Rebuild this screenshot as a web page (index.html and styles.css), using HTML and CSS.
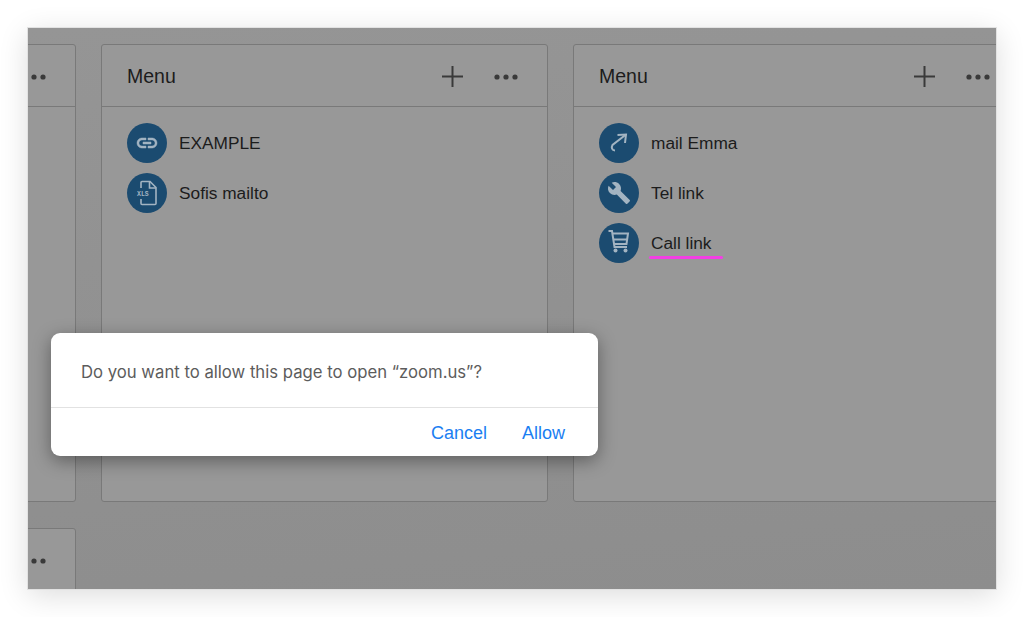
FILE: index.html
```
<!DOCTYPE html>
<html lang="en">
<head>
<meta charset="utf-8">
<title>Menu</title>
<link rel="stylesheet" href="styles.css">
</head>
<body>
<main class="window">
  <div class="board">
    <section class="card">
      <header class="card-head card-head-end">
        <div class="card-tools">
          <svg class="dots" viewBox="0 0 24 6"><circle cx="3" cy="3" r="2.600"/><circle cx="12" cy="3" r="2.600"/><circle cx="21" cy="3" r="2.600"/></svg>
        </div>
      </header>
    </section>
    <section class="card">
      <header class="card-head">
        <h2 class="card-title">Menu</h2>
        <div class="card-tools">
          <svg class="plus" viewBox="0 0 21 21"><path d="M10.5 0v21M0 10.500h21"/></svg>
          <svg class="dots" viewBox="0 0 24 6"><circle cx="3" cy="3" r="2.600"/><circle cx="12" cy="3" r="2.600"/><circle cx="21" cy="3" r="2.600"/></svg>
        </div>
      </header>
      <ul class="items">
        <li class="item">
          <span class="badge"><svg class="glyph glyph-bold" viewBox="0 0 24 24"><path d="M3.900 12c0-1.710 1.390-3.100 3.100-3.100h4V7H7c-2.760 0-5 2.240-5 5s2.240 5 5 5h4v-1.900H7c-1.710 0-3.100-1.390-3.100-3.100zM8 13h8v-2H8v2zm9-6h-4v1.900h4c1.710 0 3.100 1.390 3.100 3.100s-1.390 3.100-3.100 3.100h-4V17h4c2.760 0 5-2.240 5-5s-2.240-5-5-5z"/></svg></span>
          <span class="label">EXAMPLE</span>
        </li>
        <li class="item">
          <span class="badge"><svg class="glyph-large" viewBox="0 0 40 40"><path class="line" d="M14 15v-5.500a1 1 0 0 1 1-1h8l6 6v16a1 1 0 0 1-1 1H15a1 1 0 0 1-1-1V26"/><path class="line" d="M22.500 8.500v6.500H29"/><text class="xls" x="10" y="22.500">XLS</text></svg></span>
          <span class="label">Sofis mailto</span>
        </li>
      </ul>
    </section>
    <section class="card">
      <header class="card-head">
        <h2 class="card-title">Menu</h2>
        <div class="card-tools">
          <svg class="plus" viewBox="0 0 21 21"><path d="M10.5 0v21M0 10.500h21"/></svg>
          <svg class="dots" viewBox="0 0 24 6"><circle cx="3" cy="3" r="2.600"/><circle cx="12" cy="3" r="2.600"/><circle cx="21" cy="3" r="2.600"/></svg>
        </div>
      </header>
      <ul class="items">
        <li class="item">
          <span class="badge"><svg class="glyph-large" viewBox="0 0 40 40"><path class="line line-bold" d="M16 27.500c-3 0-4-3-2.500-5.500L27 11.500"/><path class="line line-bold" d="M18.500 12L27 11.500 26 20"/></svg></span>
          <span class="label">mail Emma</span>
        </li>
        <li class="item">
          <span class="badge"><svg class="glyph" viewBox="0 0 24 24"><path d="M22.700 19l-9.100-9.100c.9-2.300.4-5-1.500-6.900-2-2-5-2.400-7.400-1.300L9 6 6 9 1.600 4.700C.4 7.100.9 10.100 2.900 12.100c1.900 1.900 4.600 2.400 6.900 1.500l9.100 9.100c.4.400 1 .4 1.400 0l2.300-2.300c.5-.4.5-1.100.1-1.400z"/></svg></span>
          <span class="label">Tel link</span>
        </li>
        <li class="item">
          <span class="badge"><svg class="glyph-large" viewBox="0 0 40 40"><path class="line line-bold" d="M9.500 8h3.500l2.500 16h12.500"/><path class="line line-bold" d="M13.500 10.500H29l-1.500 10.500H15"/><path class="line line-bold" d="M15 16.500h13"/><circle class="wheel" cx="16.500" cy="27.500" r="2"/><circle class="wheel" cx="26.500" cy="27.500" r="2"/></svg></span>
          <span class="label">Call link</span>
          <span class="scribble"></span>
        </li>
      </ul>
    </section>
    <section class="card">
      <header class="card-head card-head-end">
        <div class="card-tools">
          <svg class="dots" viewBox="0 0 24 6"><circle cx="3" cy="3" r="2.600"/><circle cx="12" cy="3" r="2.600"/><circle cx="21" cy="3" r="2.600"/></svg>
        </div>
      </header>
    </section>
  </div>
  <div class="dialog" role="dialog">
    <p class="dialog-text">Do you want to allow this page to open “zoom.us”?</p>
    <div class="dialog-actions">
      <button class="dialog-btn">Cancel</button>
      <button class="dialog-btn">Allow</button>
    </div>
  </div>
</main>
</body>
</html>
```
FILE: styles.css
```
* { box-sizing: border-box; }
html, body { margin: 0; height: 100%; background: #fff; overflow: hidden; }
body { padding: 28px; font-family: "Liberation Sans", Arial, sans-serif; }

.window {
  position: relative;
  width: 968px;
  height: 561px;
  overflow: hidden;
  background: linear-gradient(175deg, #959595, #8d8d8d);
  box-shadow: 0 0 0 1px #e2e2e2, 0 6px 28px rgba(0, 0, 0, .14);
}

.board {
  display: grid;
  grid-template-columns: repeat(3, 447px);
  grid-auto-rows: 458px;
  gap: 26px 25px;
  margin-left: -399px;
  padding-top: 16px;
}

.card {
  background: #989898;
  border: 1px solid #797979;
  border-radius: 3px;
}

.card-head {
  display: flex;
  align-items: center;
  justify-content: space-between;
  height: 62px;
  padding: 2px 29px 0 25px;
  border-bottom: 1px solid #797979;
}

.card-head-end { justify-content: flex-end; }

.card-title {
  margin: 0;
  font-size: 19.500px;
  font-weight: 400;
  color: #1c1c1c;
}

.card-tools { display: flex; align-items: center; gap: 31px; }
.plus { width: 21px; height: 21px; fill: none; stroke: #3a3a3a; stroke-width: 2; }
.dots { width: 24px; height: 6px; fill: #3a3a3a; }

.items {
  list-style: none;
  margin: 0;
  padding: 16px 25px 0;
  display: flex;
  flex-direction: column;
  gap: 10px;
}

.item { position: relative; display: flex; align-items: center; gap: 12px; height: 40px; }

.badge {
  width: 40px;
  height: 40px;
  flex: none;
  display: flex;
  align-items: center;
  justify-content: center;
  border-radius: 50%;
  background: #1b4b70;
}

.glyph { width: 24px; height: 24px; fill: #a3b4c2; }
.glyph-bold { stroke: #a3b4c2; stroke-width: .5; }
.glyph-large { width: 40px; height: 40px; }
.line { fill: none; stroke: #a3b4c2; stroke-width: 1.600; }
.line-bold { stroke-width: 2; }
.wheel { fill: #a3b4c2; }
.xls { font: 700 6.500px "Liberation Mono", monospace; fill: #a3b4c2; }

.label { padding-top: 1px; font-size: 17.300px; color: #1c1c1c; }

.scribble {
  position: absolute;
  left: 50px;
  bottom: 4px;
  width: 74px;
  height: 3px;
  border-radius: 2px;
  background: #f23fe4;
}

.dialog {
  position: absolute;
  left: 23px;
  top: 305px;
  width: 547px;
  height: 123px;
  background: #fff;
  border-radius: 9px;
  box-shadow: 0 5px 18px rgba(0, 0, 0, .38);
}

.dialog-text {
  margin: 0;
  height: 75px;
  padding: 29px 30px 0;
  font-family: Inter, "Liberation Sans", sans-serif;
  font-size: 16.700px;
  line-height: 20px;
  color: #5c5c5c;
  border-bottom: 1px solid #e2e2e2;
}

.dialog-actions {
  display: flex;
  justify-content: flex-end;
  gap: 35px;
  padding: 15px 33px 0 0;
}

.dialog-btn {
  padding: 0;
  border: 0;
  background: none;
  font-family: "Liberation Sans", sans-serif;
  font-size: 18px;
  line-height: 20px;
  color: #1a7ef2;
}
```
